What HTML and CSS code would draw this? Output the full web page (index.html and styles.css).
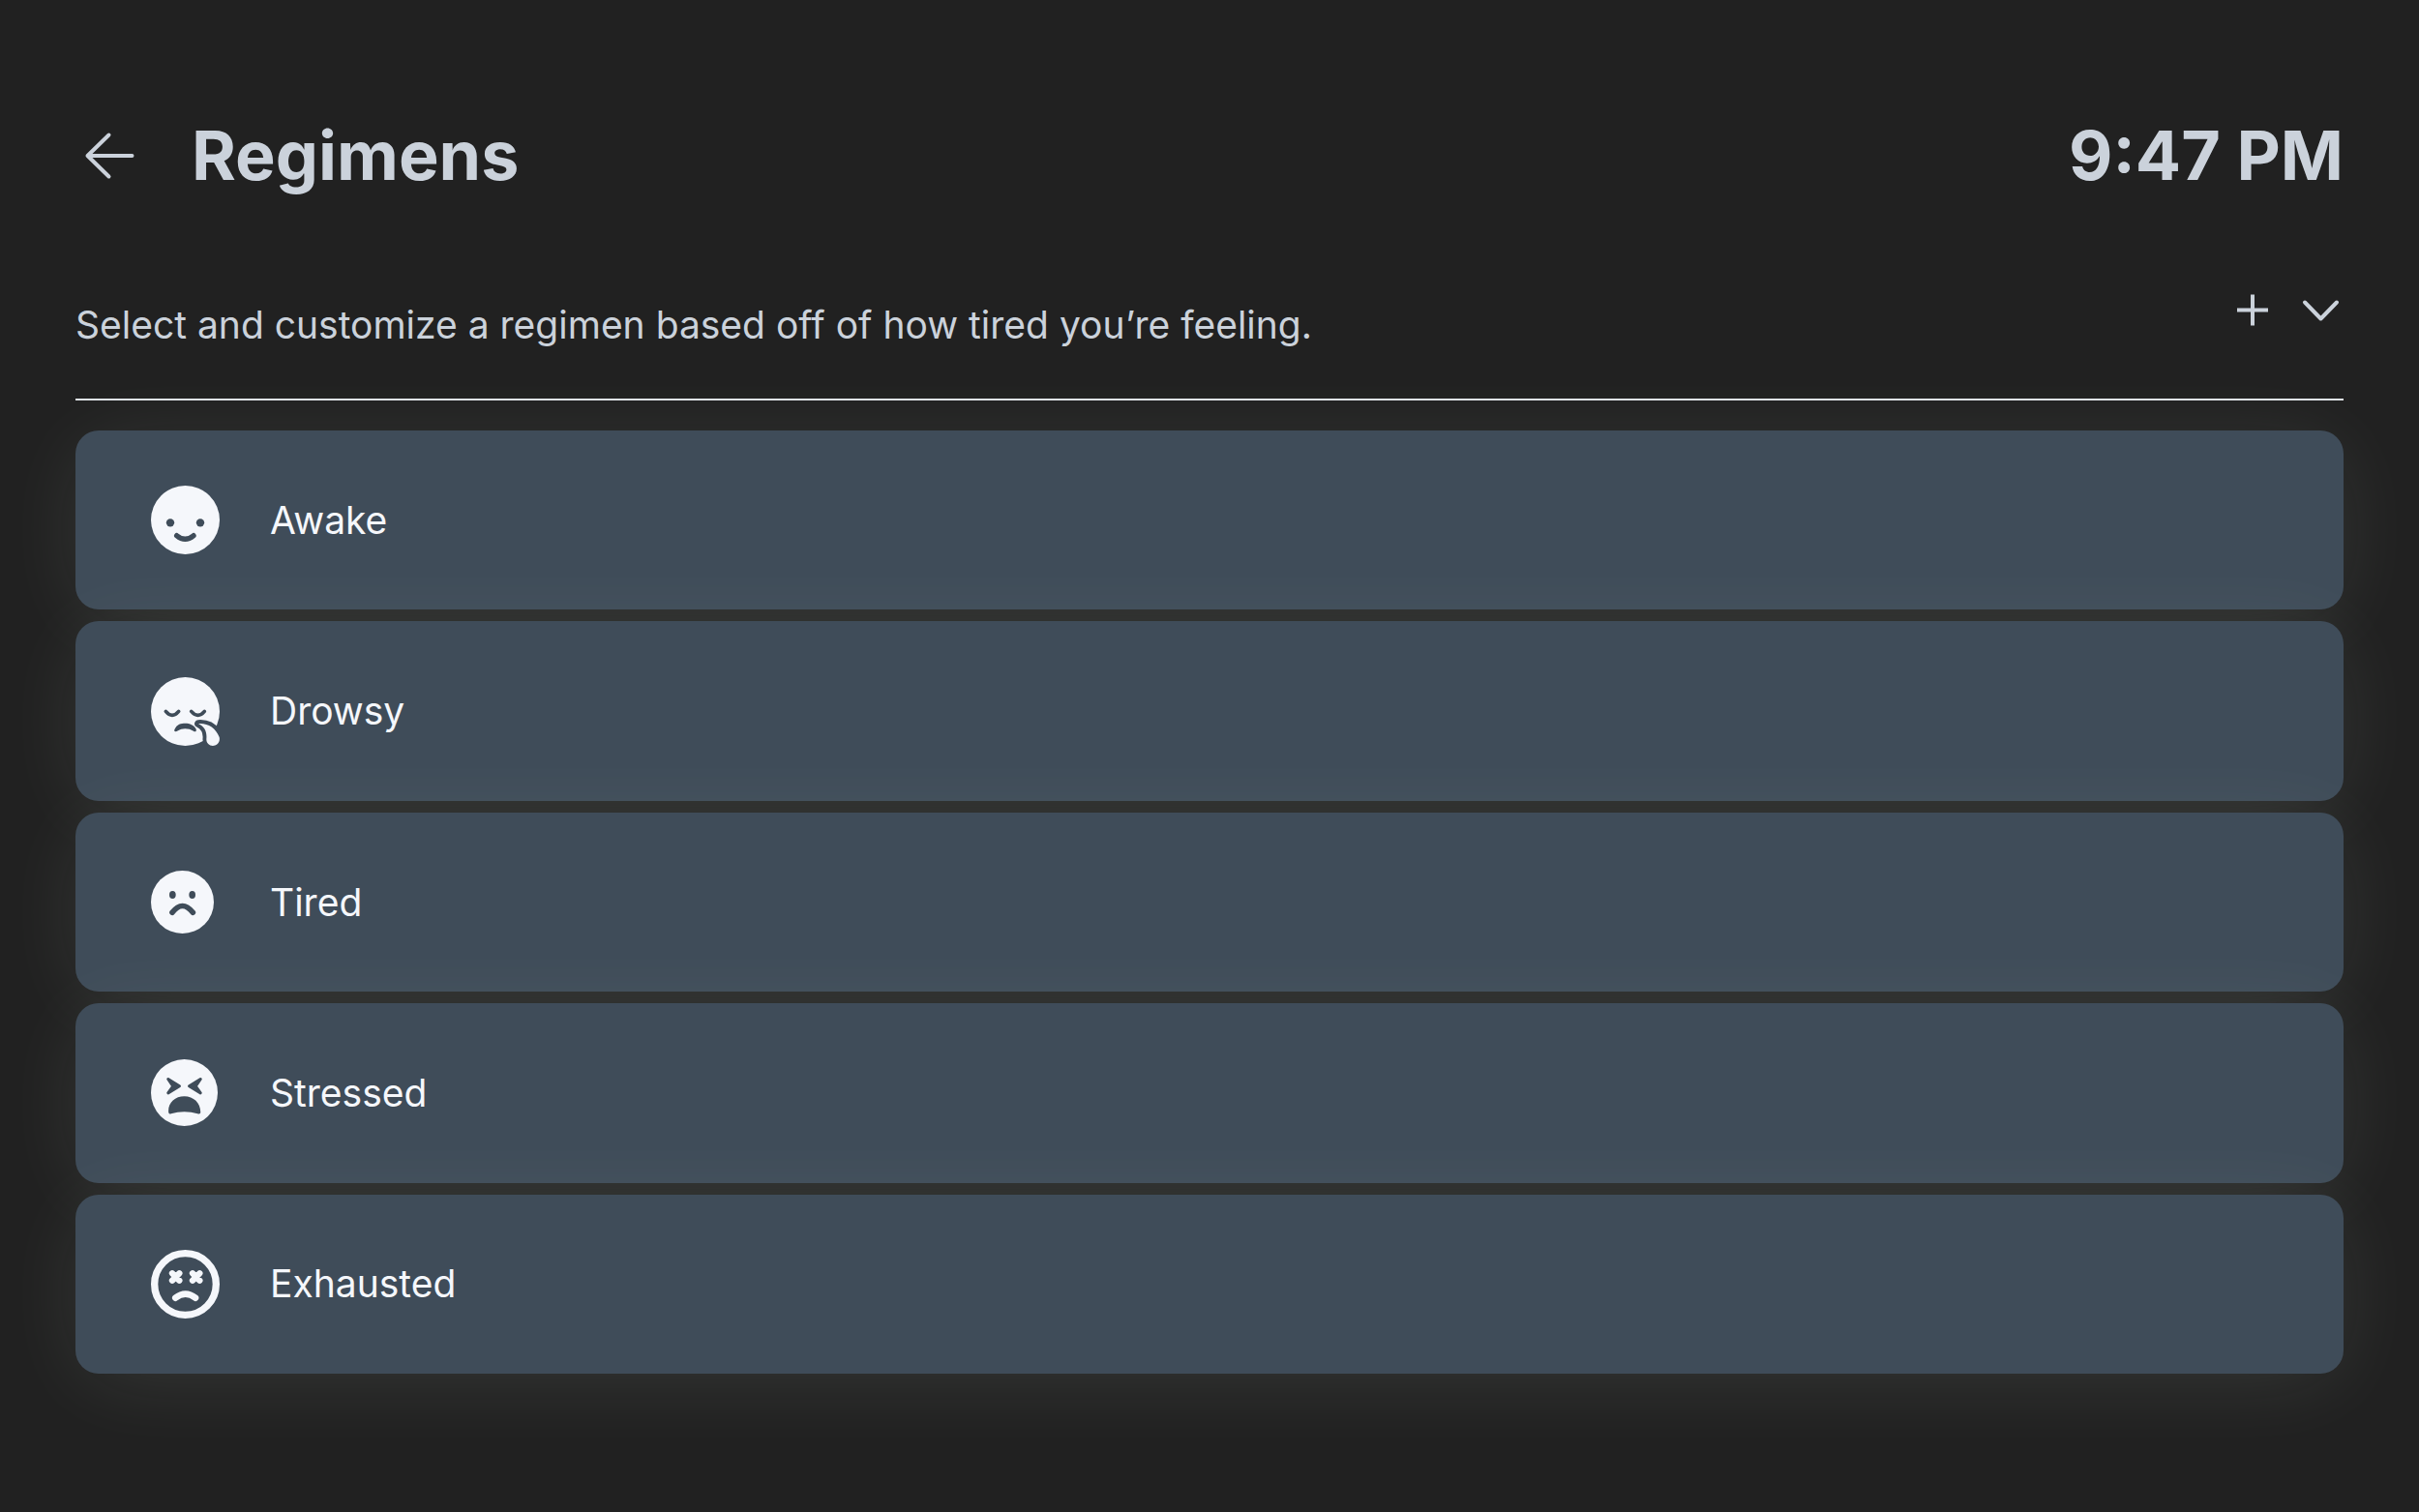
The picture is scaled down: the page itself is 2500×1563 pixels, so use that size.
FILE: index.html
```html
<!DOCTYPE html>
<html lang="en">
<head>
    <meta charset="UTF-8">
    <meta name="viewport" content="width=device-width, initial-scale=1.0">
    <title>Regimens</title>
    <link rel="stylesheet" href="styles.css">
</head>
<body>
    <div class="page">
        <header class="header">
            <button class="iconBtn back" type="button" aria-label="Back">
                <svg width="70" height="70" viewBox="0 0 70 70"><path d="M34.500 13.500L12.500 35L34.500 56.500M12.500 35H58.500"/></svg>
            </button>
            <h1 class="title">Regimens</h1>
            <time class="time" datetime="21:47">9:47 PM</time>
        </header>
        <div class="intro">
            <p class="desc">Select and customize a regimen based off of how tired you’re feeling.</p>
            <div class="tools">
                <button class="iconBtn add" type="button" aria-label="Add regimen">
                    <svg width="48" height="48" viewBox="0 0 48 48"><path d="M24 8.500V40.500M8 24.500H40"/></svg>
                </button>
                <button class="iconBtn" type="button" aria-label="Show more">
                    <svg width="48" height="48" viewBox="0 0 48 48"><path d="M8 16.500L24.500 33.500L41 16.500"/></svg>
                </button>
            </div>
        </div>
        <ul class="list">
            <li>
                <button class="card" type="button">
                    <span class="face">
                        <svg width="71" height="71" viewBox="0 0 213 213">
                            <circle class="skin" cx="106.500" cy="106.500" r="106.500"/>
                            <circle class="hole" cx="60" cy="115" r="12.500"/>
                            <circle class="hole" cx="153" cy="115" r="12.500"/>
                            <path class="cut" stroke-width="16" d="M80 155Q106 177 132 155"/>
                        </svg>
                    </span>
                    <span>Awake</span>
                </button>
            </li>
            <li>
                <button class="card" type="button">
                    <span class="face">
                        <svg width="71" height="71" viewBox="0 0 213 213">
                            <circle class="skin" cx="106.500" cy="106.500" r="106.500"/>
                            <path class="cut" stroke-width="11" d="M46 106Q66 130 86 106M125 106Q146 130 166 106"/>
                            <path class="hole" d="M73 163C80 145 94 143 106 143C120 143 134 148 140 161C142 168 137 171 132 167C118 158 96 157 84 166C76 171 71 169 73 163Z"/>
                            <path class="tear" d="M147 144C177 142 200 156 212 186C216 204 202 213 192 213C180 213 171 204 172 191C174 170 167 154 147 144Z"/>
                        </svg>
                    </span>
                    <span>Drowsy</span>
                </button>
            </li>
            <li>
                <button class="card" type="button">
                    <span class="face">
                        <svg width="65" height="65" viewBox="0 0 195 195">
                            <circle class="skin" cx="97.500" cy="97.500" r="97.500"/>
                            <ellipse class="hole" cx="67" cy="75" rx="10" ry="12"/>
                            <ellipse class="hole" cx="128" cy="75" rx="10" ry="12"/>
                            <path class="cut" stroke-width="17" d="M66 130Q97.500 89 130 130"/>
                        </svg>
                    </span>
                    <span>Tired</span>
                </button>
            </li>
            <li>
                <button class="card" type="button">
                    <span class="face">
                        <svg width="69" height="69" viewBox="0 0 206 206">
                            <circle class="skin" cx="103" cy="103" r="103"/>
                            <path class="eye" d="M53 61L88 83L53 104L68 83ZM153 61L118 83L153 104L138 83Z"/>
                            <path class="hole" d="M54 160C54 132 75 114 103 114C131 114 153 134 153 163C153 169 149 170 144 168C118 160 88 160 62 168C57 170 54 168 54 160Z"/>
                        </svg>
                    </span>
                    <span>Stressed</span>
                </button>
            </li>
            <li>
                <button class="card" type="button">
                    <span class="face">
                        <svg width="71" height="71" viewBox="0 0 213 213">
                            <circle class="line" cx="106.500" cy="106.500" r="95.500" stroke-width="22"/>
                            <path class="line" stroke-width="19" d="M66 73L88 95M88 73L66 95M129 73L151 95M151 73L129 95"/>
                            <path class="line" stroke-width="20" d="M76 149Q107 125 138 149"/>
                        </svg>
                    </span>
                    <span>Exhausted</span>
                </button>
            </li>
        </ul>
    </div>
</body>
</html>
```

FILE: styles.css
```css
*{
    padding: 0;
    margin: 0;
    list-style: none;
    box-sizing: border-box;
}
body{
    background-color: #212121;
    color: #cbd2db;
    font-family: Inter, "Liberation Sans", sans-serif;
}
.page{
    display: flex;
    flex-direction: column;
    min-height: 100vh;
    padding: 118px 78px 143px;
}
button{
    border: none;
    background: none;
    color: inherit;
    font: inherit;
    cursor: pointer;
}
svg{
    display: block;
}
.iconBtn path{
    fill: none;
    stroke: #cbd2db;
    stroke-width: 4px;
    stroke-linecap: round;
    stroke-linejoin: round;
}
.iconBtn.add path{
    stroke-linecap: butt;
}
.header{
    display: flex;
    align-items: center;
    font-size: 70px;
    line-height: 86px;
    font-weight: 700;
}
.title{
    flex: 1;
    margin-left: 50px;
    font-size: inherit;
}
.intro{
    display: flex;
    justify-content: space-between;
    align-items: flex-start;
    margin-top: 92px;
    padding-bottom: 52px;
    border-bottom: 2px solid #dfe3e8;
}
.desc{
    padding-top: 16px;
    font-size: 39px;
    line-height: 48px;
}
.tools{
    display: flex;
    gap: 22px;
}
.list{
    display: flex;
    flex: 1;
    flex-direction: column;
    gap: 12px;
    margin-top: 31px;
}
.list li{
    display: flex;
    flex: 1;
}
.card{
    display: flex;
    flex: 1;
    align-items: center;
    gap: 52px;
    min-height: 120px;
    padding: 0 78px;
    border-radius: 24px;
    background-color: #3f4c59;
    /* soft glow, falls a little lower than the card */
    box-shadow: 0 10px 90px -8px rgba(240,255,240,0.11);
    color: #f5f7fb;
    font-size: 39px;
    line-height: 48px;
}
.face{
    width: 71px;
}
.skin{
    fill: #f5f7fb;
}
.hole{
    fill: #3f4c59;
}
.cut{
    fill: none;
    stroke: #3f4c59;
    stroke-linecap: round;
}
.eye{
    fill: #3f4c59;
    stroke: #3f4c59;
    stroke-width: 9px;
    stroke-linejoin: round;
}
.tear{
    fill: #f5f7fb;
    stroke: #3f4c59;
    stroke-width: 23px;
    stroke-linejoin: round;
    paint-order: stroke;
}
.line{
    fill: none;
    stroke: #f5f7fb;
    stroke-linecap: round;
}
```
